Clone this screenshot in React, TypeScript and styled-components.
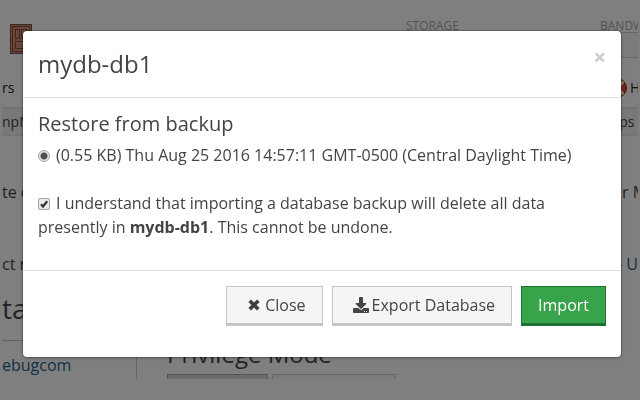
import React, { useState } from "react";
import styled, { createGlobalStyle } from "styled-components";
import { FaDownload } from "react-icons/fa";

const GlobalStyle = createGlobalStyle`
  *, *::before, *::after { box-sizing: border-box; }
  body {
    margin: 0;
    background: #7f7f7f;
    color: #222;
    font-family: "Open Sans", sans-serif;
    font-size: 16px;
    line-height: 24px;
  }
  h1, h2, h3, p { margin: 0; font-weight: 400; }
  button { font-family: inherit; cursor: pointer; }
`;

const Stage = styled.div`
  min-height: 100vh;
`;

const Page = styled.div`
  padding: 0 2px;
  height: 379px;
  overflow: hidden;
  white-space: nowrap;
`;

const TopBar = styled.header`
  display: flex;
  height: 74px;
  padding: 16px 0 0 8px;
`;

const Logo = styled.svg`
  flex: none;
  margin-top: 8px;
`;

const Usage = styled.div`
  flex: none;
  width: 194px;
  color: #535353;
  font-size: 12px;
  line-height: 20px;
  &:first-of-type { margin-left: auto; }
  &:last-of-type { width: 38px; overflow: hidden; }
`;

const Meter = styled.div`
  height: 26px;
  margin-top: -4px;
  margin-left: 20px;
  border: 1px solid #686868;
  border-width: 1px 0;
  background: #7b7b79;
`;

const Row = styled.div<{ $height: number; $shaded?: boolean; $small?: boolean }>`
  display: flex;
  justify-content: space-between;
  align-items: center;
  height: ${(p) => p.$height}px;
  background: ${(p) => (p.$shaded ? "#787878" : "transparent")};
  border-top: ${(p) => (p.$shaded ? "2px solid #727272" : "0")};
  border-bottom: ${(p) => (p.$shaded ? "1px solid #727272" : "0")};
  font-size: ${(p) => (p.$small ? 14 : 16)}px;
`;

const NavRow = styled(Row)`
  margin-bottom: 6px;
  color: #111;
`;

const Edge = styled.span<{ $width?: number }>`
  display: flex;
  align-items: center;
  gap: 3px;
  width: ${(p) => (p.$width ? p.$width + "px" : "auto")};
  overflow: hidden;
  & > svg { flex: none; }
`;

const PageLink = styled.a`
  color: #11303f;
  text-decoration: none;
`;

const SideTitle = styled.h2`
  font-size: 28px;
  line-height: 36px;
  padding: 10px 0 14px;
  width: 134px;
  border-bottom: 1px solid #606060;
`;

const Columns = styled.div`
  display: flex;
  height: 60px;
`;

const Side = styled.nav`
  width: 135px;
  padding-top: 12px;
  border-right: 1px solid #666;
`;

const Privileges = styled.section`
  padding-left: 30px;
`;

const SectionTitle = styled.h3`
  font-size: 24px;
  line-height: 26px;
  margin-bottom: 7px;
`;

const Modes = styled.div`
  display: flex;
  gap: 4px;
`;

const Mode = styled.button<{ $active?: boolean }>`
  width: ${(p) => (p.$active ? 101 : 124)}px;
  height: 36px;
  border: 1px solid ${(p) => (p.$active ? "#555" : "#666")};
  background: ${(p) => (p.$active ? "#6c6c6d" : "#7b7b7b")};
`;

const Overlay = styled.div`
  position: fixed;
  inset: 0;
  padding: 31px 19px 0 23px;
`;

const Dialog = styled.div`
  background: #fff;
  color: #444;
  border-radius: 4px;
  box-shadow: 0 0 0 1px rgba(0, 0, 0, 0.2), 0 1px 4px rgba(0, 0, 0, 0.2);
`;

const DialogHeader = styled.header`
  display: flex;
  justify-content: space-between;
  align-items: flex-start;
  padding: 15px;
  border-bottom: 1px solid #e2e2e2;
`;

const DialogTitle = styled.h1`
  font-size: 24px;
  line-height: 36px;
`;

const CloseX = styled.button`
  padding: 0;
  border: 0;
  background: none;
  color: #ccc;
  font-size: 22px;
  font-weight: 700;
  line-height: 20px;
`;

const DialogBody = styled.div`
  padding: 14px 15px 31px;
`;

const BodyTitle = styled.h2`
  font-size: 20px;
  line-height: 24px;
  margin-bottom: 7px;
`;

const Choice = styled.label`
  display: block;
  & + & { margin-top: 24px; }
`;

const Radio = styled.input`
  appearance: none;
  width: 12px;
  height: 12px;
  margin: 0 6px 0 0;
  vertical-align: -1px;
  border: 1px solid #a5a5a5;
  border-radius: 50%;
  background: #e9e9e9;
  &:checked { background: radial-gradient(circle, #505050 0 3px, #e6e6e6 4px); }
`;

const CheckWrap = styled.span`
  display: inline-grid;
  width: 12px;
  height: 12px;
  margin-right: 6px;
  vertical-align: -1px;
  & > * { grid-area: 1 / 1; }
`;

const Check = styled.input`
  appearance: none;
  width: 12px;
  height: 12px;
  margin: 0;
  border: 1px solid #a5a5a5;
  border-radius: 2px;
  background: #e9e9e9;
  & + svg { visibility: hidden; pointer-events: none; }
  &:checked + svg { visibility: visible; }
`;

const DialogFooter = styled.footer`
  display: flex;
  flex-wrap: wrap;
  justify-content: flex-end;
  gap: 9px;
  padding: 15px 15px 31px;
  border-top: 1px solid #e2e2e2;
`;

const Button = styled.button<{ $primary?: boolean; $indent?: boolean }>`
  display: inline-flex;
  align-items: center;
  gap: ${(p) => (p.$indent ? 5 : 3)}px;
  height: 40px;
  padding: 0 16px 0 ${(p) => (p.$primary ? 16 : p.$indent ? 21 : 20)}px;
  border: 1px solid ${(p) => (p.$primary ? "#1d7431" : "#c3c6c6")};
  border-bottom-width: 3px;
  background: ${(p) => (p.$primary ? "#37a34b" : "#f5f5f7")};
  color: ${(p) => (p.$primary ? "#fff" : "#444")};
  font-size: 16px;
  line-height: 24px;
  white-space: nowrap;
`;

const CrossIcon = () => (
  <svg width="12" height="12" viewBox="0 0 12 12" aria-hidden="true">
    <path d="M3 .8 6 3.8 9 .8 11.3 3 8.3 6 11.3 9 9 11.3 6 8.3 3 11.3.7 9 3.7 6 .7 3Z" fill="#3c3c3c" stroke="#3c3c3c" strokeWidth=".5" strokeLinejoin="round" />
  </svg>
);

const BuoyIcon = () => (
  <svg width="20" height="20" viewBox="0 0 20 20" aria-hidden="true">
    <circle cx="10" cy="10" r="7" fill="none" stroke="#702818" strokeWidth="6" />
    <g stroke="#908078" strokeWidth="3">
      <path d="m3 3 4 4M17 3l-4 4M3 17l4-4M17 17l-4-4" />
    </g>
    <circle cx="10" cy="10" r="9.3" fill="none" stroke="#40201c" />
  </svg>
);

export default function App() {
  const [backup, setBackup] = useState(true);
  const [agreed, setAgreed] = useState(true);
  return (
    <Stage>
      <GlobalStyle />
      <Page>
        <TopBar>
          <Logo width="22" height="30" viewBox="0 0 22 30" aria-hidden="true">
            <rect x=".5" y=".5" width="21" height="29" fill="#6a4538" stroke="#3c2823" />
            <g fill="none" stroke="#3c2823">
              <rect x="2.5" y="2.5" width="17" height="25" />
              <rect x="5.5" y="5.5" width="4" height="9" />
              <rect x="11.5" y="5.5" width="5" height="9" />
              <rect x="5.5" y="17.5" width="11" height="7" />
            </g>
          </Logo>
          <Usage>STORAGE</Usage>
          <Usage>
            BANDWIDTH
            <Meter />
          </Usage>
        </TopBar>
        <NavRow $height={27} $small>
          <Edge>rs</Edge>
          <Edge $width={31}>
            <BuoyIcon />
            Help
          </Edge>
        </NavRow>
        <Row $height={29} $shaded $small>
          <Edge>npM</Edge>
          <Edge>ps&nbsp;</Edge>
        </Row>
        <Row $height={112}>
          <Edge>te d</Edge>
          <Edge $width={16}>r M</Edge>
        </Row>
        <Row $height={32}>
          <Edge>ct n</Edge>
          <PageLink href="#users">- U</PageLink>
        </Row>
        <SideTitle>ta</SideTitle>
        <Columns>
          <Side>
            <PageLink href="#database">ebugcom</PageLink>
          </Side>
          <Privileges>
            <SectionTitle>Privilege Mode</SectionTitle>
            <Modes>
              <Mode $active aria-label="Simple" />
              <Mode aria-label="Advanced" />
            </Modes>
          </Privileges>
        </Columns>
      </Page>
      <Overlay>
        <Dialog role="dialog" aria-modal="true" aria-labelledby="dialog-title">
          <DialogHeader>
            <DialogTitle id="dialog-title">mydb-db1</DialogTitle>
            <CloseX type="button" aria-label="Dismiss">×</CloseX>
          </DialogHeader>
          <DialogBody>
            <BodyTitle>Restore from backup</BodyTitle>
            <Choice>
              <Radio type="radio" name="backup" checked={backup} onChange={() => setBackup(true)} />
              (0.55 KB) Thu Aug 25 2016 14:57:11 GMT-0500 (Central Daylight Time)
            </Choice>
            <Choice>
              <CheckWrap>
                <Check type="checkbox" checked={agreed} onChange={(e) => setAgreed(e.target.checked)} />
                <svg width="12" height="12" viewBox="0 0 12 12" aria-hidden="true">
                  <path d="m3 6.3 2 2.2 4.2-5.3" fill="none" stroke="#333" strokeWidth="2.2" />
                </svg>
              </CheckWrap>
              I understand that importing a database backup will delete all data presently in{" "}
              <strong>mydb-db1</strong>. This cannot be undone.
            </Choice>
          </DialogBody>
          <DialogFooter>
            <Button type="button" $indent>
              <CrossIcon />
              Close
            </Button>
            <Button type="button">
              <FaDownload size={16} aria-hidden="true" />
              Export Database
            </Button>
            <Button type="button" $primary>Import</Button>
          </DialogFooter>
        </Dialog>
      </Overlay>
    </Stage>
  );
}
